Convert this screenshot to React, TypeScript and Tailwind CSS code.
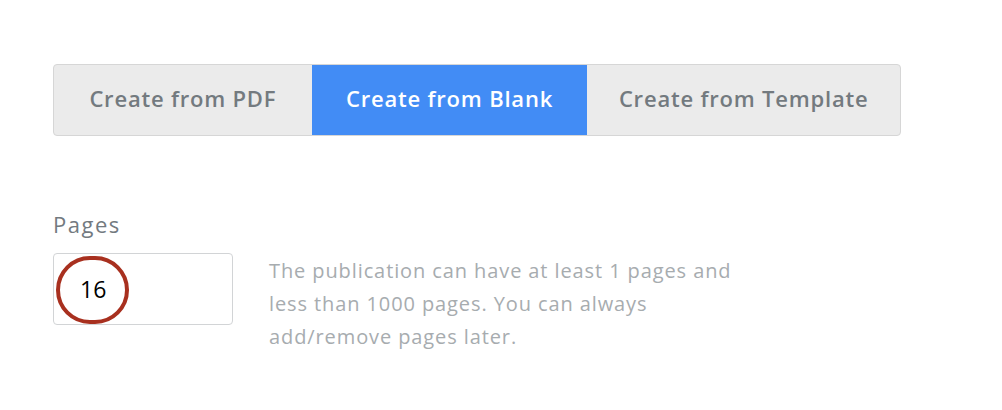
import { useState } from "react"

const TABS = [
  { label: "Create from PDF", w: "w-[258px]" },
  { label: "Create from Blank", w: "w-[276px]" },
  { label: "Create from Template", w: "w-[313px]" },
]

export default function App() {
  const [active, setActive] = useState(1)
  const [pages, setPages] = useState("16")

  return (
    <div className="h-[410px] w-[1002px] bg-white pl-[53px] pt-[64px] font-['Open_Sans',sans-serif]">
      <div className="flex w-[848px] overflow-hidden rounded-[4px] border border-[#d6d6d6] bg-[#ebebeb]">
        {TABS.map((tab, i) => (
          <button
            key={tab.label}
            onClick={() => setActive(i)}
            className={
              i === active
                ? `flex h-[70px] items-center justify-center bg-[#428cf5] pb-[3px] text-[22px] font-semibold tracking-[0.8px] text-white ${tab.w}`
                : `flex h-[70px] items-center justify-center pb-[3px] text-[22px] font-semibold tracking-[0.8px] text-[#737a7f] ${tab.w}`
            }
          >
            {tab.label}
          </button>
        ))}
      </div>

      <div className="mt-[74px] text-[22px] leading-[28px] tracking-[1.5px] text-[#737a7f]">Pages</div>

      <div className="mt-[15px] flex items-start gap-[36px]">
        <div className="relative">
          <input
            value={pages}
            onChange={(e) => setPages(e.target.value)}
            className="h-[72px] w-[180px] rounded-[4px] border border-[#d2d4d6] bg-white pl-[26px] text-[23px] text-black outline-none"
          />
          <span className="pointer-events-none absolute left-[3px] top-[3px] h-[68px] w-[73px] rounded-full border-[4px] border-[#a8301f]" />
        </div>
        <p className="w-[475px] pt-[1px] text-[20px] leading-[33px] tracking-[0.9px] text-[#a7acaf]">
          The publication can have at least 1 pages and less than 1000 pages. You can always add/remove pages later.
        </p>
      </div>
    </div>
  )
}
